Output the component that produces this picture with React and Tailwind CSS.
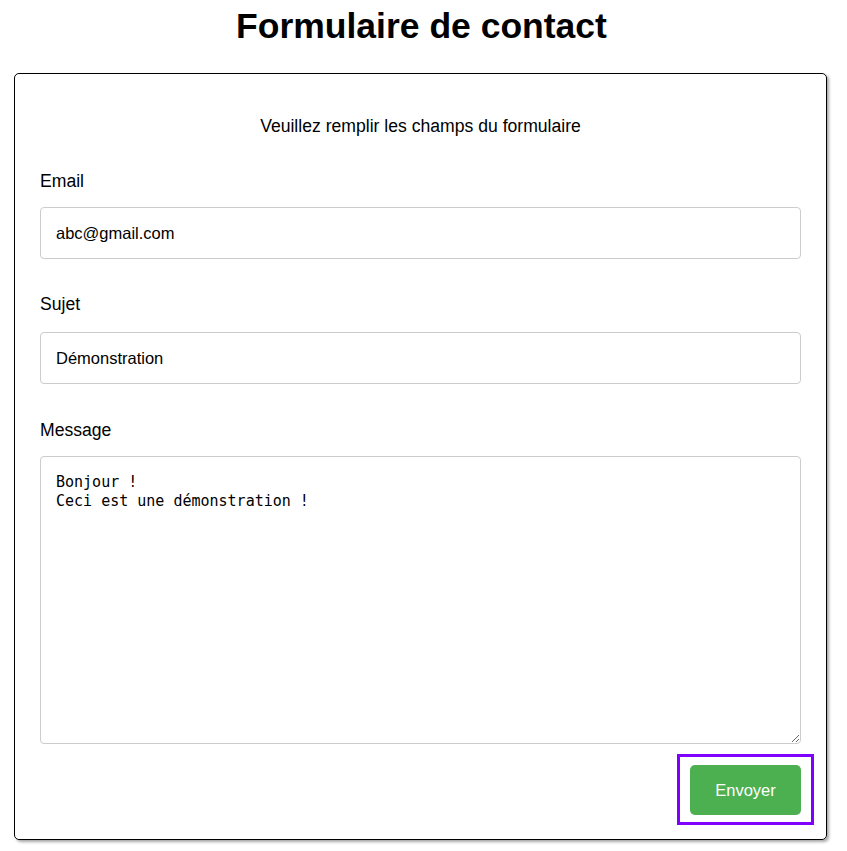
import { useState } from 'react';

export default function App() {
  const [email, setEmail] = useState('abc@gmail.com');
  const [sujet, setSujet] = useState('Démonstration');
  const [message, setMessage] = useState('Bonjour !\nCeci est une démonstration !');

  return (
    <div className="min-h-screen bg-white pt-[6px] font-['Liberation_Sans',Arial,sans-serif] text-black">
      <h1 className="pr-[4px] text-center text-[35.5px] font-bold leading-[40px]">Formulaire de contact</h1>

      <div className="ml-[14px] mt-[27px] w-[813px] rounded-[5px] border border-black px-[25px] pt-[42px] pb-[24px] shadow-[2px_2px_3px_rgba(0,0,0,0.35)]">
        <p className="text-center text-[17.6px] leading-[20px]">Veuillez remplir les champs du formulaire</p>

        <form onSubmit={(e) => e.preventDefault()}>
          <div className="mt-[35px]">
            <label className="block text-[17.6px] leading-[20px]">Email</label>
            <input
              type="email"
              value={email}
              onChange={(e) => setEmail(e.target.value)}
              className="mt-[16px] block h-[52px] w-full rounded-[4px] border border-[#ccc] px-[15px] text-[16.5px] outline-none"
            />
          </div>

          <div className="mt-[35px]">
            <label className="block text-[17.6px] leading-[20px]">Sujet</label>
            <input
              type="text"
              value={sujet}
              onChange={(e) => setSujet(e.target.value)}
              className="mt-[18px] block h-[52px] w-full rounded-[4px] border border-[#ccc] px-[15px] text-[16.5px] outline-none"
            />
          </div>

          <div className="mt-[36px]">
            <label className="block text-[17.6px] leading-[20px]">Message</label>
            <textarea
              value={message}
              onChange={(e) => setMessage(e.target.value)}
              className="mt-[16px] block h-[288px] w-full rounded-[4px] border border-[#ccc] px-[15px] pt-[16px] font-['DejaVu_Sans_Mono',monospace] text-[15px] leading-[19px] outline-none"
            />
          </div>

          <div className="mt-[21px] flex justify-end">
            <div className="relative">
              <span className="pointer-events-none absolute -inset-x-[13px] -top-[11px] -bottom-[10px] border-3 border-[#7f00ff]" />
              <button type="submit" className="block h-[50px] w-[111px] rounded-[5px] bg-[#4caf50] text-[16.5px] text-white outline-none">
                Envoyer
              </button>
            </div>
          </div>
        </form>
      </div>
    </div>
  );
}
